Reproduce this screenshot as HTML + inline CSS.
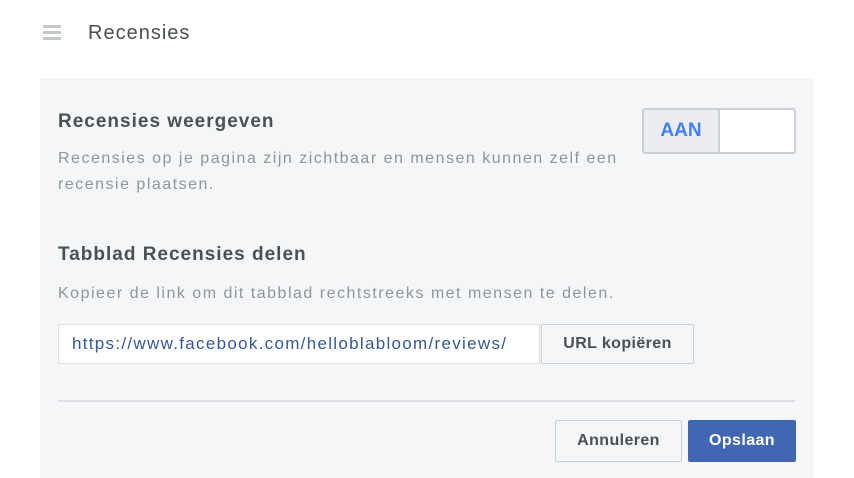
<!DOCTYPE html>
<html><head><meta charset="utf-8"><style>
*{margin:0;padding:0;box-sizing:border-box}
body{width:854px;height:478px;background:#fff;font-family:"Liberation Sans",sans-serif;position:relative;overflow:hidden}
.a{position:absolute}
.ham{left:43px;width:18px;height:3px;background:#c4c7cd}
.panel{left:40px;top:78px;width:774px;height:400px;background:#f5f6f7}
.t{color:#4b4f56;font-size:19px;font-weight:bold;letter-spacing:1px}
.d{color:#90949c;font-size:16px;line-height:26px;letter-spacing:1.5px;word-spacing:0px}
.btn{border:1px solid #ccd0d5;border-radius:2px;background:#f5f6f7;color:#4b4f56;font-weight:bold;font-size:16px;letter-spacing:0.4px;display:flex;align-items:center;justify-content:center}
</style></head><body>
<div class="a ham" style="top:25px"></div>
<div class="a ham" style="top:31px"></div>
<div class="a ham" style="top:37px"></div>
<div class="a" style="left:88px;top:22px;font-size:20px;color:#4b4f56;letter-spacing:1px">Recensies</div>
<div class="a panel"></div>
<div class="a t" style="left:58px;top:111px">Recensies weergeven</div>
<div class="a d" style="left:58px;top:146px;width:580px">Recensies op je pagina zijn zichtbaar en mensen kunnen zelf een recensie plaatsen.</div>
<div class="a" style="left:642px;top:108px;width:154px;height:46px;border:2px solid #ccd0d5;border-radius:3px;background:#fff;overflow:hidden">
<div style="width:76px;height:100%;background:#ebedf0;border-right:2px solid #ccd0d5;color:#4080ff;font-size:19px;font-weight:bold;display:flex;align-items:center;justify-content:center">AAN</div></div>
<div class="a t" style="left:58px;top:244px">Tabblad Recensies delen</div>
<div class="a d" style="left:58px;top:281px">Kopieer de link om dit tabblad rechtstreeks met mensen te delen.</div>
<div class="a" style="left:58px;top:324px;width:482px;height:40px;border:1px solid #dddfe2;background:#fff;color:#365899;font-size:17px;letter-spacing:1.3px;padding:9px 0 0 13px;white-space:nowrap;overflow:hidden">https://www.facebook.com/helloblabloom/reviews/</div>
<div class="a btn" style="left:541px;top:324px;width:153px;height:40px">URL kopiëren</div>
<div class="a" style="left:58px;top:400px;width:737px;height:2px;background:#dddfe2"></div>
<div class="a btn" style="left:555px;top:420px;width:127px;height:42px">Annuleren</div>
<div class="a btn" style="left:688px;top:420px;width:108px;height:42px;background:#4267b2;border-color:#4267b2;color:#fff">Opslaan</div>
</body></html>
